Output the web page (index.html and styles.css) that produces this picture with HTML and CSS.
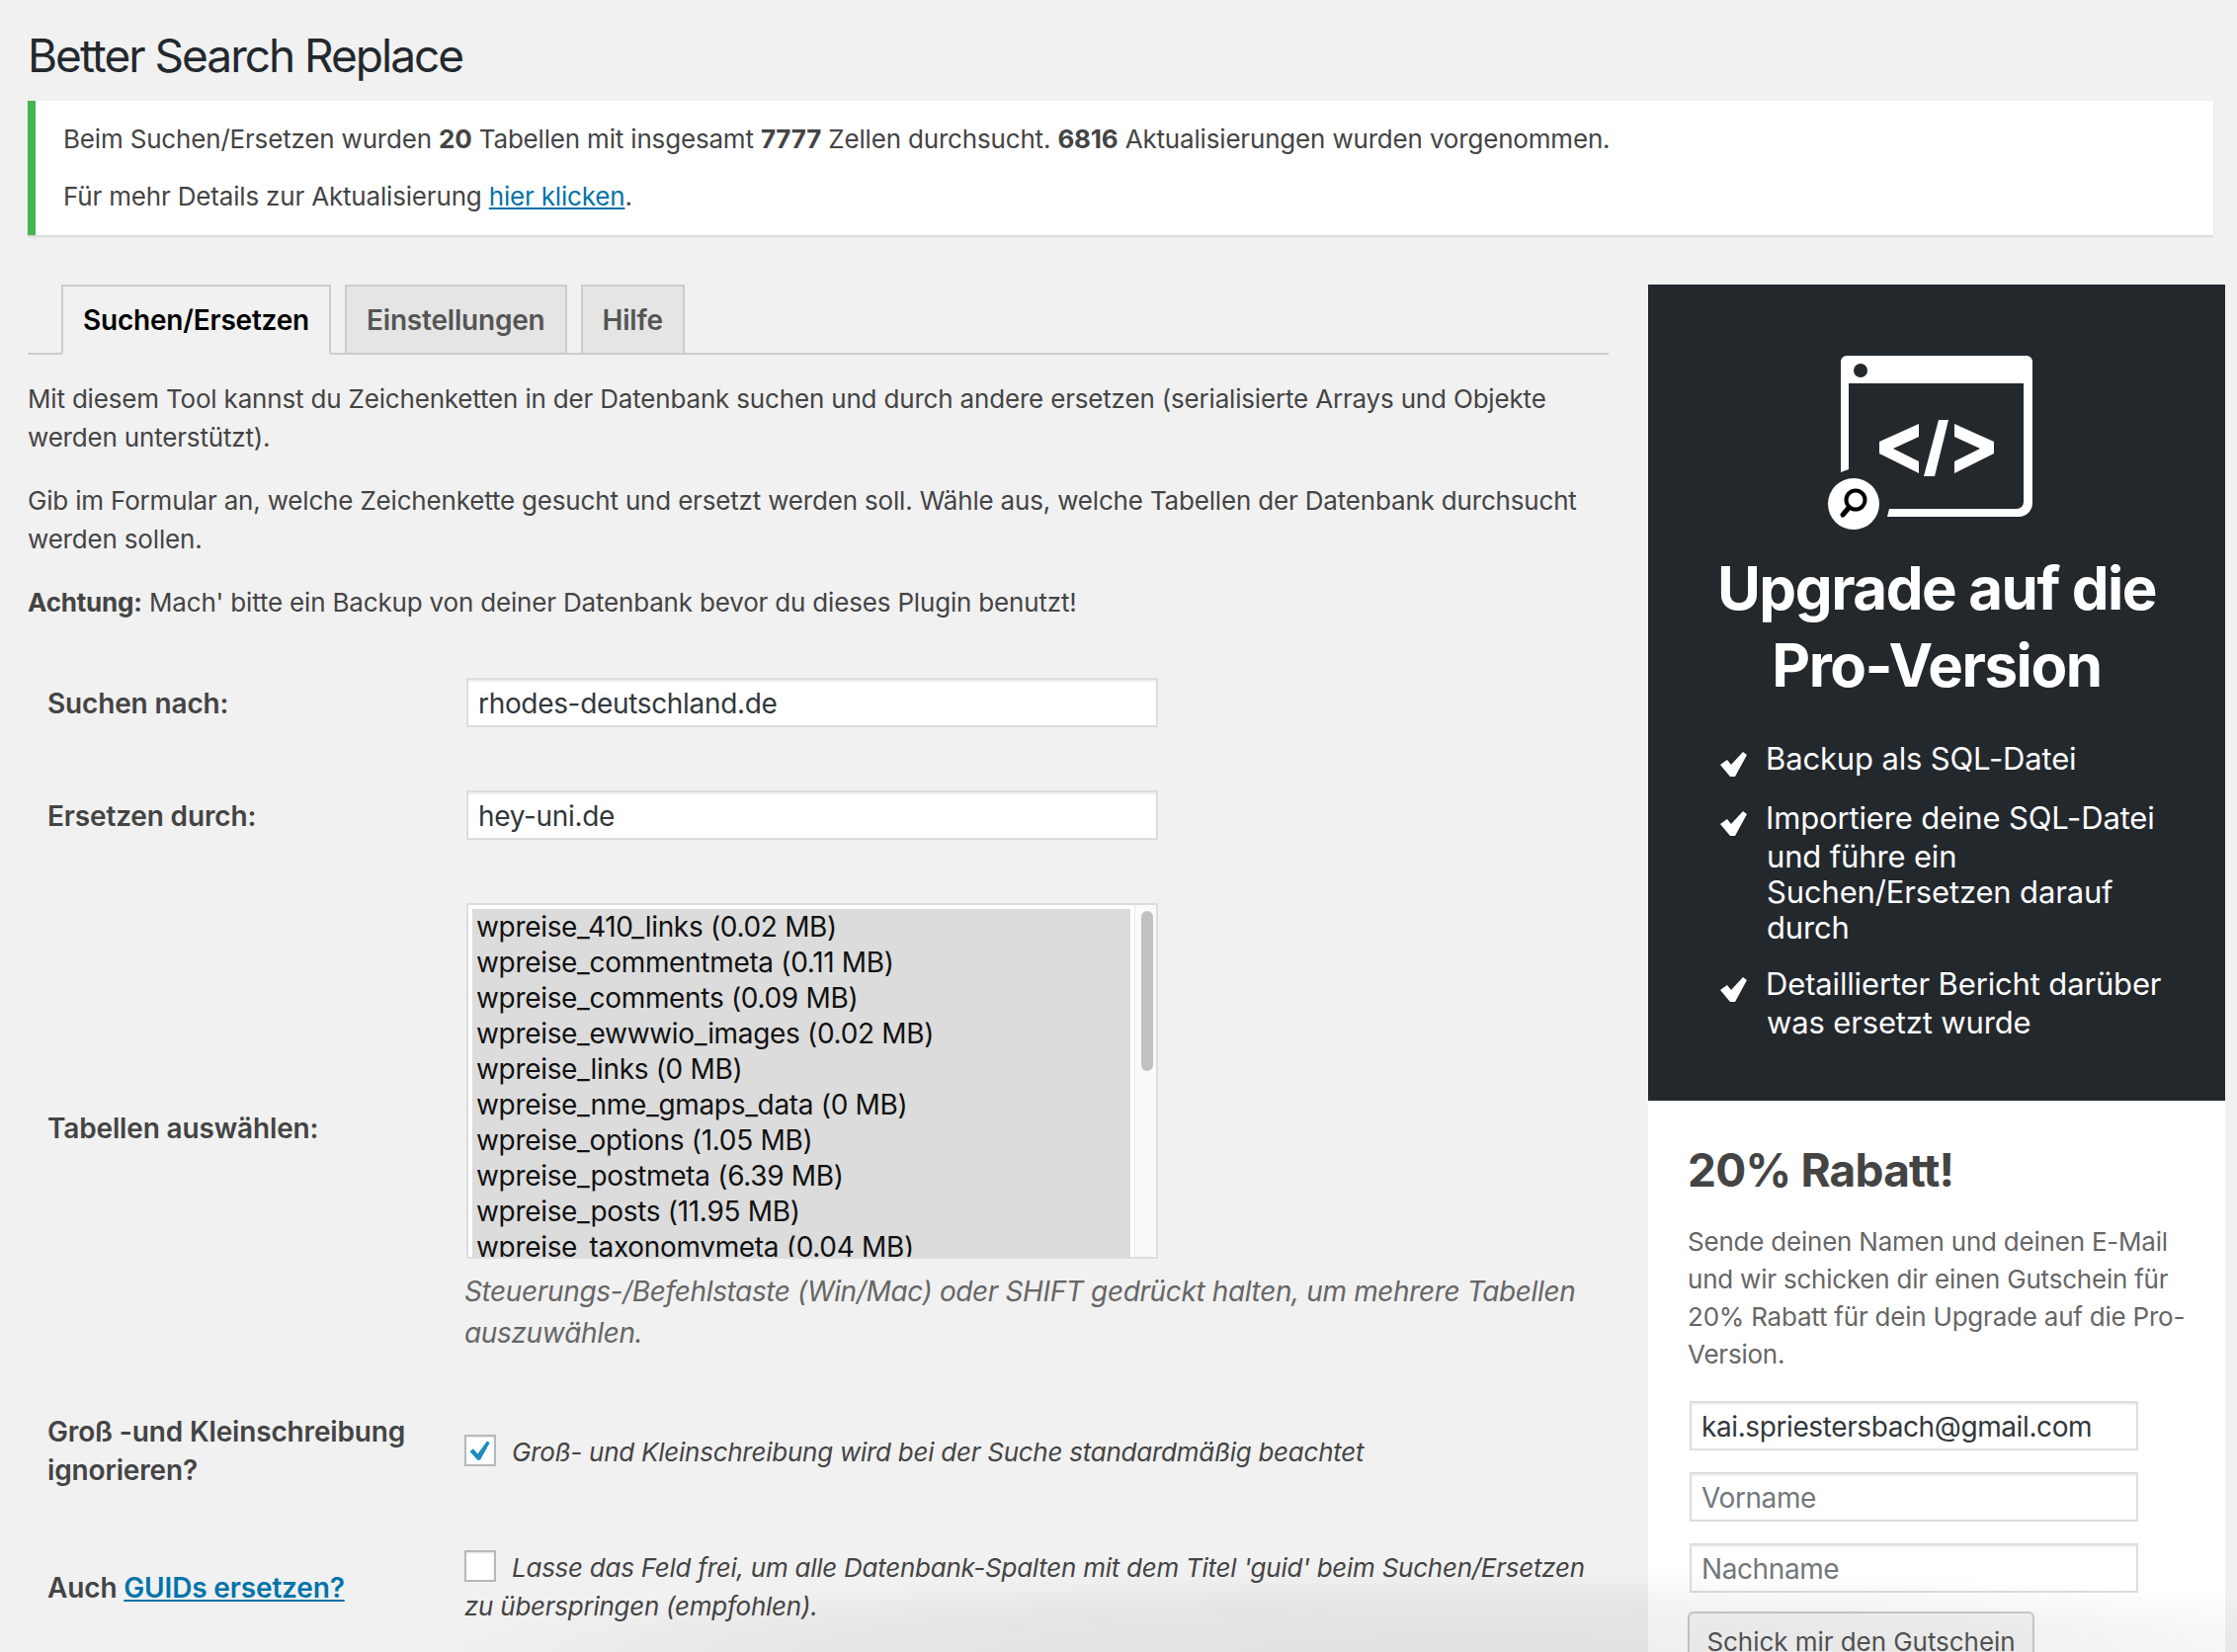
FILE: index.html
```html
<!DOCTYPE html>
<html lang="de">
<head>
<meta charset="utf-8">
<title>Better Search Replace</title>
<link rel="stylesheet" href="styles.css">
</head>
<body>
<div class="page">
  <h1 class="title">Better Search Replace</h1>
  <div class="notice">
    <p>Beim Suchen/Ersetzen wurden <b>20</b> Tabellen mit insgesamt <b>7777</b> Zellen durchsucht. <b>6816</b> Aktualisierungen wurden vorgenommen.</p>
    <p>Für mehr Details zur Aktualisierung <a href="#">hier klicken</a>.</p>
  </div>
  <div class="columns">
    <main class="main">
      <nav class="tabs">
        <a class="tab tab-active" href="#">Suchen/Ersetzen</a>
        <a class="tab" href="#">Einstellungen</a>
        <a class="tab" href="#">Hilfe</a>
      </nav>
      <p class="intro">Mit diesem Tool kannst du Zeichenketten in der Datenbank suchen und durch andere ersetzen (serialisierte Arrays und Objekte werden unterstützt).</p>
      <p class="intro">Gib im Formular an, welche Zeichenkette gesucht und ersetzt werden soll. Wähle aus, welche Tabellen der Datenbank durchsucht werden sollen.</p>
      <p class="intro"><b>Achtung:</b> Mach' bitte ein Backup von deiner Datenbank bevor du dieses Plugin benutzt!</p>
      <div class="form">
        <div class="label label-input">Suchen nach:</div>
        <div class="field"><input class="text-input" type="text" value="rhodes-deutschland.de"></div>
        <div class="label label-input">Ersetzen durch:</div>
        <div class="field"><input class="text-input" type="text" value="hey-uni.de"></div>
        <div class="label">Tabellen auswählen:</div>
        <div class="field">
          <div class="listbox">
            <div class="options">
              <div class="option">wpreise_410_links (0.02 MB)</div>
              <div class="option">wpreise_commentmeta (0.11 MB)</div>
              <div class="option">wpreise_comments (0.09 MB)</div>
              <div class="option">wpreise_ewwwio_images (0.02 MB)</div>
              <div class="option">wpreise_links (0 MB)</div>
              <div class="option">wpreise_nme_gmaps_data (0 MB)</div>
              <div class="option">wpreise_options (1.05 MB)</div>
              <div class="option">wpreise_postmeta (6.39 MB)</div>
              <div class="option">wpreise_posts (11.95 MB)</div>
              <div class="option">wpreise_taxonomymeta (0.04 MB)</div>
            </div>
            <div class="scrolltrack"><div class="scrollthumb"></div></div>
          </div>
          <p class="desc desc-list">Steuerungs-/Befehlstaste (Win/Mac) oder SHIFT gedrückt halten, um mehrere Tabellen auszuwählen.</p>
        </div>
        <div class="label label-tall">Groß -und Kleinschreibung ignorieren?</div>
        <div class="field field-tall">
          <p class="desc">
            <span class="checkbox"><svg class="tick" viewBox="0 0 32 32"><path d="M4 17l4-3 5 6L24 5l3 2-11 20h-3z"/></svg></span>Groß- und Kleinschreibung wird bei der Suche standardmäßig beachtet
          </p>
        </div>
        <div class="label label-guid">Auch <a href="#">GUIDs ersetzen?</a></div>
        <div class="field field-guid">
          <p class="desc"><span class="checkbox"></span>Lasse das Feld frei, um alle Datenbank-Spalten mit dem Titel 'guid' beim Suchen/Ersetzen zu überspringen (empfohlen).</p>
        </div>
      </div>
    </main>
    <aside class="side">
      <div class="promo">
        <svg class="promo-icon" viewBox="0 0 230 180">
          <path class="w" d="M24 4h182a6 6 0 0 1 6 6v143a14 14 0 0 1-14 14H65l2-8h129a7 7 0 0 0 7-7V32H26v87l-8 3V10a6 6 0 0 1 6-6z"/>
          <circle class="d" cx="38" cy="19" r="7"/>
          <polygon class="w" points="97,73 97,86 71,98 97,111 97,123 57,103 57,91"/>
          <polygon class="w" points="117,69 127,69 113,126 102,126"/>
          <polygon class="w" points="133,73 133,86 159,98 133,111 133,123 173,103 173,91"/>
          <circle class="w" cx="31" cy="154" r="26"/>
          <circle class="lens" cx="33" cy="150" r="9.5"/>
          <line class="handle" x1="26" y1="158" x2="20" y2="165"/>
        </svg>
        <h2 class="promo-title">Upgrade auf die Pro-Version</h2>
        <ul class="features">
          <li><svg class="check" viewBox="0 0 28 26"><path d="M0 13l7-5 4 5L23 0l4 3-12 22h-5z"/></svg>Backup als SQL-Datei</li>
          <li><svg class="check" viewBox="0 0 28 26"><path d="M0 13l7-5 4 5L23 0l4 3-12 22h-5z"/></svg>Importiere deine SQL-Datei und führe ein Suchen/Ersetzen darauf durch</li>
          <li><svg class="check" viewBox="0 0 28 26"><path d="M0 13l7-5 4 5L23 0l4 3-12 22h-5z"/></svg>Detaillierter Bericht darüber was ersetzt wurde</li>
        </ul>
      </div>
      <div class="coupon">
        <h3 class="coupon-title">20% Rabatt!</h3>
        <p class="coupon-text">Sende deinen Namen und deinen E-Mail und wir schicken dir einen Gutschein für 20% Rabatt für dein Upgrade auf die Pro-Version.</p>
        <input class="coupon-input" type="text" value="kai.spriestersbach@gmail.com">
        <input class="coupon-input" type="text" placeholder="Vorname">
        <input class="coupon-input" type="text" placeholder="Nachname">
        <button class="coupon-btn" type="button">Schick mir den Gutschein</button>
      </div>
    </aside>
  </div>
  <div class="fade"></div>
</div>
</body>
</html>
```
FILE: styles.css
```css
* { box-sizing: border-box; }
html, body { margin: 0; padding: 0; height: 100%; }
body {
  background: #f1f1f1;
  color: #444;
  font-family: Inter, "Liberation Sans", sans-serif;
  font-size: 26px;
  line-height: 39px;
  letter-spacing: -0.18px;
  overflow: hidden;
}
a { color: #0073aa; }
p { margin: 0; }
.page {
  position: relative;
  height: 1672px;
  overflow: hidden;
  padding: 23px 12px 0 28px;
}
.title {
  margin: 0 0 13px;
  font-size: 46px;
  line-height: 66px;
  font-weight: 400;
  letter-spacing: -2px;
  color: #23282d;
}
.notice {
  width: 2212px;
  height: 136px;
  padding: 19px 28px 18px;
  background: #fff;
  border-left: 8px solid #46b450;
  box-shadow: 0 2px 2px rgba(0,0,0,.1);
  line-height: 40px;
}
.notice p + p { margin-top: 18px; }
.columns {
  display: flex;
  gap: 40px;
  margin-top: 50px;
}
.main { width: 1600px; flex: none; }
.tabs {
  display: flex;
  gap: 14px;
  height: 71px;
  padding-left: 34px;
  border-bottom: 2px solid #ccc;
}
.tab {
  height: 71px;
  padding: 0 20px;
  border: 2px solid #ccc;
  background: #e5e5e5;
  color: #555;
  font-size: 28px;
  font-weight: 600;
  letter-spacing: -0.2px;
  line-height: 68px;
  text-decoration: none;
}
.tab-active {
  background: #f1f1f1;
  color: #000;
  border-bottom-color: #f1f1f1;
}
.intro { margin-top: 25px; }
.form {
  display: grid;
  grid-template-columns: 442px 1fr;
  align-items: center;
  margin-top: 57px;
}
.label {
  padding-left: 20px;
  font-weight: 600;
  font-size: 28px;
  letter-spacing: -0.15px;
}
.label-input { padding-top: 3px; }
.field:nth-child(n+3), .label:nth-child(n+3) { margin-top: 64px; }
.label-tall, .field-tall { margin-top: 60px !important; }
.label-guid { margin-top: 62px !important; }
.field-guid { margin-top: 59px !important; }
.text-input {
  display: block;
  width: 700px;
  height: 50px;
  margin-left: 2px;
  padding: 2px 10px 0;
  border: 2px solid #ddd;
  background: #fff;
  color: #32373c;
  font: 28px Inter, sans-serif;
  letter-spacing: -0.33px;
  box-shadow: inset 0 2px 2px rgba(0,0,0,.07);
}
.listbox {
  display: flex;
  width: 700px;
  height: 360px;
  margin-left: 2px;
  padding: 4px 0 0 4px;
  border: 2px solid #ddd;
  background: #fff;
  overflow: hidden;
}
.options {
  width: 666px;
  flex: none;
  height: 400px;
  background: #dcdcdc;
  color: #111;
  font-size: 28px;
  line-height: 36px;
  letter-spacing: -0.32px;
  padding-left: 4px;
}
.option { height: 36px; white-space: nowrap; }
.scrolltrack {
  flex: 1;
  margin-left: 4px;
  margin-top: -4px;
  border-left: 1px solid #e8e8e8;
  background: #fafafa;
  padding: 6px 0 0 6px;
}
.scrollthumb {
  width: 12px;
  height: 162px;
  border-radius: 6px;
  background: #c1c1c1;
}
.desc {
  font-style: italic;
  color: #444;
  font-size: 26px;
  line-height: 39px;
  letter-spacing: -0.26px;
}
.desc-list {
  margin-top: 12px;
  line-height: 42px;
  font-size: 28px;
  letter-spacing: -0.37px;
  color: #666;
}
.checkbox {
  display: inline-block;
  width: 32px;
  height: 32px;
  margin-right: 16px;
  vertical-align: -5px;
  border: 2px solid #b4b9be;
  background: #fff;
  box-shadow: inset 0 1px 2px rgba(0,0,0,.1);
}
.tick { display: block; width: 28px; height: 28px; fill: #1e8cbe; }
.side { width: 584px; flex: none; }
.promo {
  height: 826px;
  padding: 68px 50px 0 73px;
  background: #23282d;
  color: #fff;
}
.promo-icon {
  display: block;
  width: 230px;
  height: 180px;
  margin: 0 0 0 104px;
}
.w { fill: #fff; }
.d { fill: #23282d; }
.lens { fill: none; stroke: #000; stroke-width: 4; }
.handle { stroke: #000; stroke-width: 5; stroke-linecap: round; }
.promo-title {
  margin: 20px -50px 0 -73px;
  padding: 0 60px;
  text-align: center;
  font-size: 60px;
  line-height: 78px;
  font-weight: 700;
  letter-spacing: -1.45px;
}
.features {
  list-style: none;
  margin: 38px 0 0;
  padding: 0;
  font-size: 31px;
  line-height: 36px;
  letter-spacing: -0.15px;
}
.features li {
  padding-left: 47px;
  text-indent: -47px;
  margin-bottom: 21px;
}
.check {
  display: inline-block;
  width: 28px;
  height: 26px;
  margin: 0 18px 2px 0;
  vertical-align: -10px;
  fill: #fff;
}
.coupon {
  height: 600px;
  padding: 40px 30px 0 40px;
  background: #fff;
}
.coupon-title {
  margin: 0;
  font-size: 46px;
  line-height: 60px;
  font-weight: 700;
  letter-spacing: -0.8px;
  color: #444;
}
.coupon-text {
  margin-top: 24px;
  line-height: 38px;
  letter-spacing: -0.22px;
  color: #666;
}
.coupon-input {
  display: block;
  width: 454px;
  height: 50px;
  margin: 22px 0 0 2px;
  padding: 2px 10px 0;
  border: 2px solid #ddd;
  background: #fff;
  color: #32373c;
  font: 28px Inter, sans-serif;
  letter-spacing: -0.4px;
  box-shadow: inset 0 2px 2px rgba(0,0,0,.07);
}
.coupon-text + .coupon-input { margin-top: 28px; }
.coupon-input::placeholder { color: #72777c; opacity: 1; }
.coupon-btn {
  display: block;
  width: 351px;
  height: 60px;
  margin-top: 19px;
  padding: 0;
  border: 2px solid #ccc;
  border-radius: 6px;
  background: #f7f7f7;
  color: #555;
  font: 26px Inter, sans-serif;
  letter-spacing: -0.05px;
}
.fade {
  position: absolute;
  left: 0;
  right: 0;
  bottom: 0;
  height: 90px;
  pointer-events: none;
  background: radial-gradient(ellipse 1100px 85px at 1500px 90px, rgba(0,0,0,.065), rgba(0,0,0,.05) 55%, rgba(0,0,0,0));
}
```
